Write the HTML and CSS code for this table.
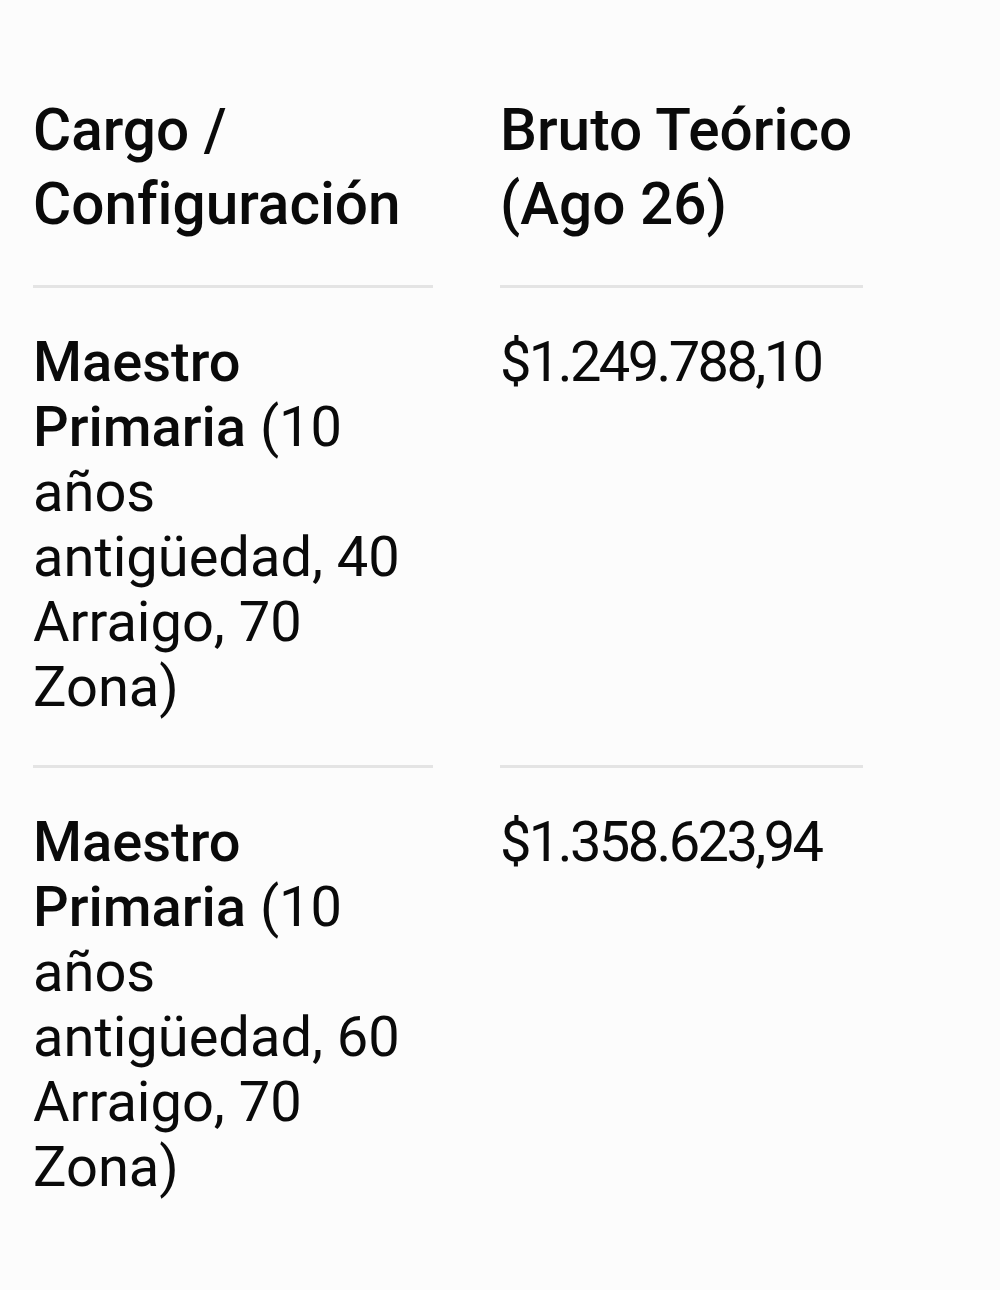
FILE: index.html
```html
<!DOCTYPE html>
<html lang="es">
<head>
<meta charset="utf-8">
<title>Tabla</title>
<link rel="stylesheet" href="styles.css">
</head>
<body>
<div class="table">
  <div class="cell head">Cargo / Configuración</div>
  <div class="cell head">Bruto Teórico (Ago 26)</div>
  <div class="cell"><strong>Maestro Primaria</strong> (10 años antigüedad, 40 Arraigo, 70 Zona)</div>
  <div class="cell amount">$1.249.788,10</div>
  <div class="cell last"><strong>Maestro Primaria</strong> (10 años antigüedad, 60 Arraigo, 70 Zona)</div>
  <div class="cell amount last">$1.358.623,94</div>
</div>
</body>
</html>
```
FILE: styles.css
```css
html, body {
  margin: 0;
  padding: 0;
  background: #fcfcfc;
}
body {
  font-family: "Roboto", "Liberation Sans", sans-serif;
  font-variant-ligatures: no-common-ligatures;
  color: #0a0a0a;
  padding: 93px 0 0 33px;
}
.table {
  display: grid;
  grid-template-columns: 400px 363px;
  column-gap: 67px;
}
.cell {
  font-size: 56px;
  line-height: 65px;
  padding: 42px 0 45px;
  border-bottom: 3px solid #e4e4e4;
}
.cell.head {
  font-size: 58.5px;
  font-weight: 500;
  line-height: 74px;
  padding: 0 0 44px;
}
.cell strong {
  font-weight: 500;
}
.cell.amount {
  letter-spacing: -2.6px;
}
.cell.last {
  border-bottom: none;
}
```
